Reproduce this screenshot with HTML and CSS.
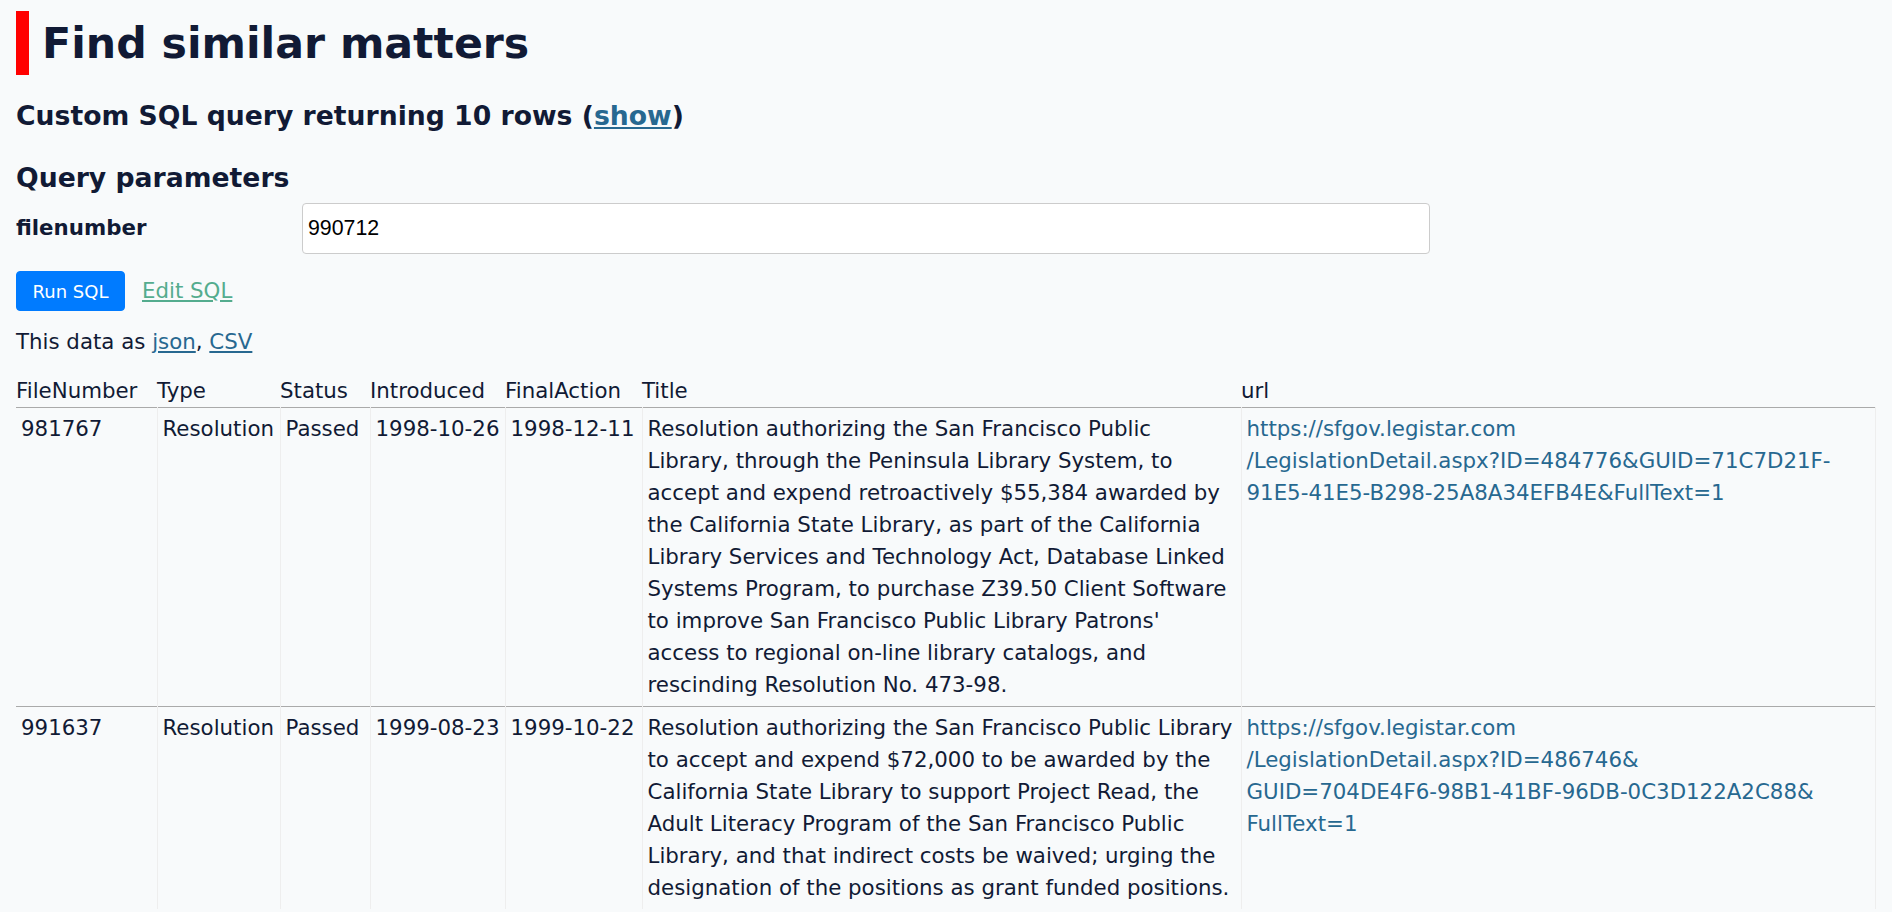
FILE: index.html
```html
<!DOCTYPE html>
<html lang="en">
<head>
<meta charset="utf-8">
<title>Find similar matters</title>
<link rel="stylesheet" href="styles.css">
</head>
<body>
<div class="page">
  <h1 class="page-title">Find similar matters</h1>
  <h3 class="section-title">Custom SQL query returning 10 rows (<a class="link" href="#">show</a>)</h3>
  <form class="sql-form">
    <h3 class="section-title params-title">Query parameters</h3>
    <div class="param-row">
      <label class="param-label" for="filenumber">filenumber</label>
      <input class="param-input" id="filenumber" type="text" value="990712">
    </div>
    <div class="actions">
      <button class="run-btn" type="button">Run SQL</button>
      <a class="link visited" href="#">Edit SQL</a>
    </div>
  </form>
  <p class="export">This data as <a class="link" href="#">json</a>, <a class="link" href="#">CSV</a></p>
  <table class="rows-table">
    <thead>
      <tr>
        <th class="c-num">FileNumber</th>
        <th class="c-type">Type</th>
        <th class="c-status">Status</th>
        <th class="c-intro">Introduced</th>
        <th class="c-final">FinalAction</th>
        <th class="c-title">Title</th>
        <th class="c-url">url</th>
      </tr>
    </thead>
    <tbody>
      <tr>
        <td>981767</td>
        <td>Resolution</td>
        <td>Passed</td>
        <td>1998-10-26</td>
        <td>1998-12-11</td>
        <td class="lines">Resolution authorizing the San Francisco Public<br>Library, through the Peninsula Library System, to<br>accept and expend retroactively $55,384 awarded by<br>the California State Library, as part of the California<br>Library Services and Technology Act, Database Linked<br>Systems Program, to purchase Z39.50 Client Software<br>to improve San Francisco Public Library Patrons'<br>access to regional on-line library catalogs, and<br>rescinding Resolution No. 473-98.</td>
        <td class="lines"><a class="cell-link" href="#">https://sfgov.legistar.com<br>/LegislationDetail.aspx?ID=484776&amp;GUID=71C7D21F-<br>91E5-41E5-B298-25A8A34EFB4E&amp;FullText=1</a></td>
      </tr>
      <tr>
        <td>991637</td>
        <td>Resolution</td>
        <td>Passed</td>
        <td>1999-08-23</td>
        <td>1999-10-22</td>
        <td class="lines">Resolution authorizing the San Francisco Public Library<br>to accept and expend $72,000 to be awarded by the<br>California State Library to support Project Read, the<br>Adult Literacy Program of the San Francisco Public<br>Library, and that indirect costs be waived; urging the<br>designation of the positions as grant funded positions.</td>
        <td class="lines"><a class="cell-link" href="#">https://sfgov.legistar.com<br>/LegislationDetail.aspx?ID=486746&amp;<br>GUID=704DE4F6-98B1-41BF-96DB-0C3D122A2C88&amp;<br>FullText=1</a></td>
      </tr>
    </tbody>
  </table>
</div>
</body>
</html>
```

FILE: styles.css
```css
html, body {
  margin: 0;
  padding: 0;
}

body {
  background: #F8FAFB;
  color: #111A35;
  font-family: "DejaVu Sans", sans-serif;
  font-size: 21.33px;
  line-height: 1.5;
}

.page {
  padding: 11px 16px 0 16px;
}

.page-title {
  margin: 0;
  font-size: 42.67px;
  line-height: 64px;
  font-weight: 700;
  border-left: 13px solid #ff0000;
  padding-left: 13px;
}

.section-title {
  margin: 21px 0 0 0;
  font-size: 26.67px;
  line-height: 40px;
  font-weight: 700;
}

.params-title {
  margin-top: 22px;
}

.link {
  color: #276890;
  text-decoration: underline;
}

.link.visited {
  color: #54AC8E;
}

.sql-form {
  margin: 0;
}

.param-row {
  display: flex;
  align-items: baseline;
  margin-top: 5px;
}

.param-label {
  width: 286px;
  font-weight: 700;
}

.param-input {
  box-sizing: border-box;
  width: 1128px;
  height: 51px;
  padding: 0 5px;
  border: 1px solid #cccccc;
  border-radius: 4px;
  background: #ffffff;
  font-family: "Liberation Sans", Arial, sans-serif;
  font-size: 21.33px;
  color: #000000;
}

.actions {
  display: flex;
  align-items: center;
  gap: 17px;
  margin-top: 17px;
}

.run-btn {
  box-sizing: border-box;
  height: 40px;
  width: 109px;
  padding: 0;
  border: 1px solid #007bff;
  border-radius: 4px;
  background: #007bff;
  color: #ffffff;
  font-family: "DejaVu Sans", sans-serif;
  font-size: 18px;
}

.export {
  margin: 15px 0 0 0;
}

.rows-table {
  width: 100%;
  border-collapse: collapse;
  table-layout: fixed;
  margin-top: 15px;
}

.rows-table th {
  box-sizing: border-box;
  text-align: left;
  font-weight: 400;
  padding: 2px 21px 0 0;
  white-space: nowrap;
  line-height: 32px;
}

.rows-table td {
  border-top: 1px solid #aaaaaa;
  border-right: 1px solid #eeeeee;
  padding: 5px 5px 5px 5px;
  vertical-align: top;
  line-height: 32px;
  white-space: nowrap;
}

.c-num { width: 141px; }
.c-type { width: 123px; }
.c-status { width: 90px; }
.c-intro { width: 135px; }
.c-final { width: 137px; }
.c-title { width: 599px; }

.cell-link {
  color: #276890;
  text-decoration: none;
}
```
